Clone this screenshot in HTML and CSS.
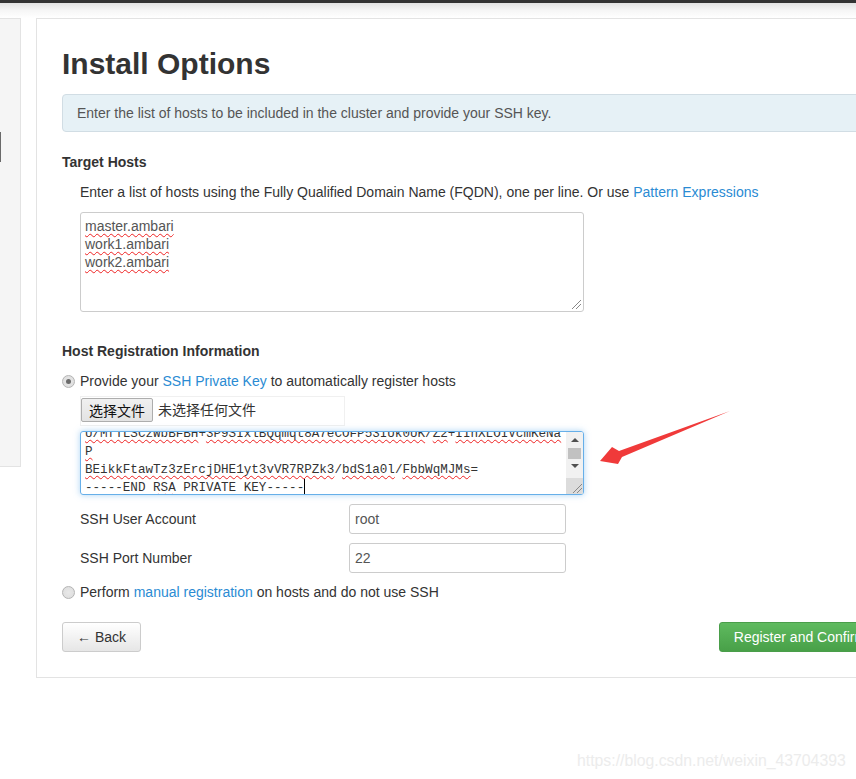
FILE: index.html
```html
<!DOCTYPE html>
<html>
<head>
<meta charset="utf-8">
<title>Install Options</title>
<link rel="stylesheet" href="styles.css">
</head>
<body>
<div class="topbar"></div>
<div class="topshadow"></div>
<div class="layout">
  <aside class="sidebar"><div class="side-mark"></div></aside>
  <main class="panel">
    <h2 class="title">Install Options</h2>
    <div class="alert">Enter the list of hosts to be included in the cluster and provide your SSH key.</div>

    <h5 class="section">Target Hosts</h5>
    <p class="desc">Enter a list of hosts using the Fully Qualified Domain Name (FQDN), one per line. Or use <a class="link">Pattern Expressions</a></p>
    <div class="hosts">
      <div class="tline"><span class="sp">master.ambari</span></div>
      <div class="tline"><span class="sp">work1.ambari</span></div>
      <div class="tline"><span class="sp">work2.ambari</span></div>
      <span class="grip"></span>
    </div>

    <h5 class="section section-reg">Host Registration Information</h5>
    <div class="radio-row">
      <span class="radio checked"></span>
      <span>Provide your <a class="link">SSH Private Key</a> to automatically register hosts</span>
    </div>
    <div class="filebox">
      <span class="filebtn">选择文件</span>
      <span class="filename">未选择任何文件</span>
    </div>
    <div class="keybox">
      <div class="keytext">
        <div class="kinner">
          <div class="kline"><span class="sp">U/MfTLSCzWbBFBH</span>+<span class="sp">3P9SIxlBQqmqt8A7eCOFP53IUk0UK</span>/<span class="sp">Z2</span>+<span class="sp">IIhXLOIVcmKeNa</span></div>
          <div class="kline"><span class="sp">P</span></div>
          <div class="kline"><span class="sp">BEikkFtawTz3zErcjDHE1yt3vVR7RPZk3</span>/<span class="sp">bdS1a0l</span>/<span class="sp">FbbWqMJMs</span>=</div>
          <div class="kline">-----END <span class="sp">RSA</span> PRIVATE KEY-----<span class="caret"></span></div>
        </div>
      </div>
      <div class="vscroll">
        <span class="arrow up"></span>
        <span class="thumb"></span>
        <span class="arrow down"></span>
        <span class="track"></span>
        <span class="corner"><span class="grip grip-in"></span></span>
      </div>
    </div>

    <div class="field-row">
      <label class="flabel">SSH User Account</label>
      <div class="input">root</div>
    </div>
    <div class="field-row">
      <label class="flabel">SSH Port Number</label>
      <div class="input">22</div>
    </div>

    <div class="radio-row radio-row2">
      <span class="radio"></span>
      <span>Perform <a class="link">manual registration</a> on hosts and do not use SSH</span>
    </div>

    <div class="actions">
      <button class="btn">&larr; Back</button>
      <button class="btn btn-success">Register and Confirm &rarr;</button>
    </div>
  </main>
</div>

<svg class="red-arrow" width="856" height="779" viewBox="0 0 856 779">
  <polygon points="600,461 612,447 619,451 730,411 622,457 618,464" fill="#f03a3a"/>
</svg>
<div class="watermark">https://blog.csdn.net/weixin_43704393</div>
</body>
</html>
```
FILE: styles.css
```css
html, body {
  margin: 0;
  padding: 0;
  overflow: hidden;
  background: #fff;
}
body {
  font-family: "Liberation Sans", Arial, "Noto Sans CJK SC", sans-serif;
  font-size: 14px;
  line-height: 20px;
  color: #333;
  width: 925px;
  height: 779px;
  position: relative;
}
.topbar {
  height: 3px;
  background: #333;
}
.topshadow {
  height: 15px;
  background: linear-gradient(#e2e2e2, #f6f6f6 50%, #fff);
}
.layout {
  display: flex;
  align-items: flex-start;
  gap: 15px;
}
.sidebar {
  width: 20px;
  height: 447px;
  background: #f5f5f5;
  border: 1px solid #e3e3e3;
  border-left: none;
  box-sizing: content-box;
}
.side-mark {
  width: 1px;
  height: 30px;
  margin-top: 113px;
  background: #6a6a6a;
}
.panel {
  flex: 1;
  border: 1px solid #e3e3e3;
  padding: 25px 25px 25px 25px;
  height: 608px;
  background: #fff;
}
.title {
  margin: 0 0 10px;
  font-size: 30px;
  line-height: 40px;
  font-weight: bold;
  color: #333;
}
.alert {
  background: #e6f1f6;
  border: 1px solid #d1dde4;
  border-radius: 4px;
  padding: 8px 14px;
  color: #555;
}
.section {
  margin: 20px 0 0;
  font-size: 14px;
  line-height: 20px;
  font-weight: bold;
}
.section-reg {
  margin-top: 29px;
}
.desc {
  margin: 10px 0 0 18px;
}
.link {
  color: #2a8bd3;
  text-decoration: none;
}
.hosts {
  position: relative;
  margin: 10px 0 0 18px;
  width: 494px;
  height: 90px;
  border: 1px solid #ccc;
  border-radius: 3px;
  padding: 4px 4px;
  line-height: 18px;
  color: #555;
}
.sp {
  text-decoration: underline wavy #e22;
  text-decoration-thickness: 1px;
  text-underline-offset: 2px;
  text-decoration-skip-ink: none;
}
.grip {
  position: absolute;
  right: 2px;
  bottom: 2px;
  width: 9px;
  height: 9px;
  background: linear-gradient(135deg, transparent 45%, #888 45%, #888 52%, transparent 52%, transparent 70%, #888 70%, #888 77%, transparent 77%);
}
.radio-row {
  display: flex;
  align-items: center;
  gap: 5px;
  margin-top: 10px;
}
.radio {
  width: 11px;
  height: 11px;
  border-radius: 50%;
  border: 1px solid #b4b4b4;
  background: radial-gradient(circle, #e8e8e8 0, #dcdcdc 100%);
  display: flex;
  align-items: center;
  justify-content: center;
  flex: none;
}
.radio.checked::after {
  content: "";
  width: 5px;
  height: 5px;
  border-radius: 50%;
  background: #6b6b6b;
}
.filebox {
  margin: 5px 0 0 18px;
  width: 263px;
  height: 28px;
  border: 1px solid #f0f0f0;
  background: #fff;
  display: flex;
  align-items: center;
  gap: 5px;
}
.filebtn {
  font-family: "Noto Sans CJK SC", sans-serif;
  font-size: 14px;
  line-height: 22px;
  padding: 0 7px;
  border: 1px solid #adadad;
  background: linear-gradient(#f0f0f0, #e3e3e3);
  border-radius: 2px;
  color: #111;
  margin-top: -2px;
}
.filename {
  font-family: "Noto Sans CJK SC", sans-serif;
  font-size: 14px;
  color: #333;
  margin-top: -5px;
}
.keybox {
  margin: 5px 0 0 18px;
  width: 502px;
  height: 62px;
  border: 1px solid #66afe9;
  border-radius: 3px;
  box-shadow: 0 0 6px rgba(102, 175, 233, 0.55);
  display: flex;
  overflow: hidden;
}
.keytext {
  flex: 1;
  overflow: hidden;
  padding: 0 4px;
}
.kinner {
  margin-top: -7px;
}
.kline {
  font-family: "Liberation Mono", "Courier New", monospace;
  font-size: 12.6px;
  line-height: 18px;
  white-space: pre;
  color: #333;
}
.caret {
  display: inline-block;
  width: 1px;
  height: 16px;
  background: #000;
  vertical-align: -4px;
}
.vscroll {
  width: 17px;
  background: #f1f1f1;
  display: flex;
  flex-direction: column;
  align-items: center;
}
.arrow {
  width: 0;
  height: 0;
  border-left: 4px solid transparent;
  border-right: 4px solid transparent;
  flex: none;
}
.arrow.up {
  margin-top: 6px;
  border-bottom: 4px solid #505050;
}
.thumb {
  margin-top: 6px;
  width: 13px;
  height: 11px;
  background: #c1c1c1;
  flex: none;
}
.arrow.down {
  margin-top: 5px;
  border-top: 4px solid #505050;
}
.track {
  flex: 1;
}
.corner {
  position: relative;
  width: 17px;
  height: 16px;
  background: #dcdcdc;
  flex: none;
}
.grip-in {
  right: 1px;
  bottom: 1px;
}
.field-row {
  display: flex;
  align-items: center;
  margin: 9px 0 0 18px;
}
.flabel {
  width: 269px;
  flex: none;
}
.input {
  width: 205px;
  height: 28px;
  line-height: 28px;
  border: 1px solid #ccc;
  border-radius: 3px;
  padding: 0 5px;
  color: #555;
}
.radio-row2 {
  margin-top: 9px;
}
.actions {
  margin-top: 20px;
  display: flex;
  justify-content: space-between;
}
.btn {
  font-family: "Liberation Sans", Arial, sans-serif;
  font-size: 14px;
  line-height: 20px;
  height: 30px;
  padding: 4px 14px;
  border: 1px solid #ccc;
  border-radius: 3px;
  background: linear-gradient(#fff, #e6e6e6);
  color: #333;
}
.btn-success {
  color: #fff;
  border-color: #4a9e4a;
  background: linear-gradient(#5fba5f, #48a048);
}
.red-arrow {
  position: absolute;
  left: 0;
  top: 0;
  pointer-events: none;
}
.watermark {
  position: absolute;
  left: 577px;
  top: 751px;
  font-size: 15.8px;
  line-height: 20px;
  color: #ececec;
}
```
